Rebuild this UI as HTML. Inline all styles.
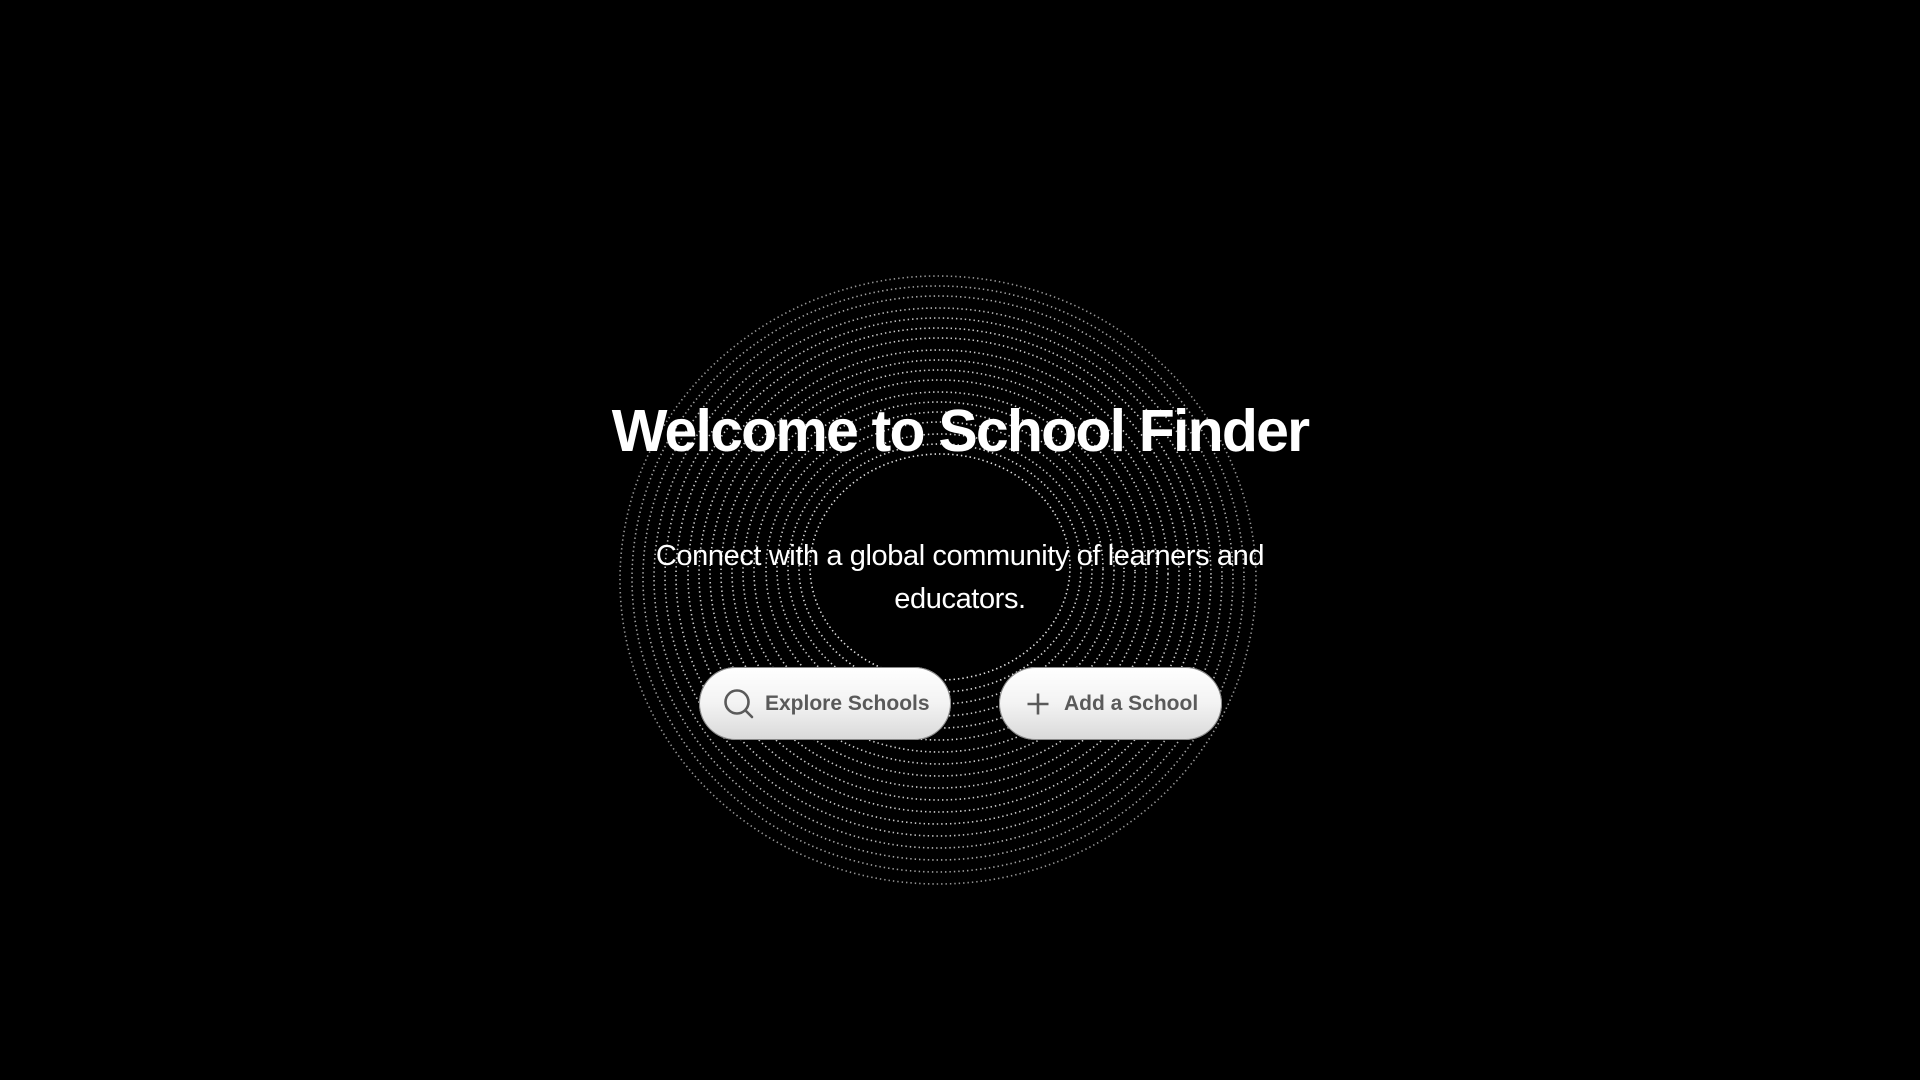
<!DOCTYPE html>
<html><head><meta charset="utf-8"><style>
html,body{margin:0;padding:0;background:#000;width:1920px;height:1080px;overflow:hidden;font-family:"Liberation Sans",sans-serif}
svg.bg{position:absolute;left:0;top:0}
.t{position:absolute;left:0;width:1920px;text-align:center;color:#fff}
h1{margin:0;font-size:59px;font-weight:bold;top:398px;letter-spacing:-1.8px;line-height:66px}
.sub{top:535px;font-size:29px;line-height:43px;letter-spacing:-0.4px}
.btn{position:absolute;top:667px;height:73px;border-radius:37px;background:linear-gradient(#fff 0%,#f3f3f3 50%,#d9d9d9 100%);color:#5a5a5a;font-weight:bold;font-size:21px;box-shadow:0 0 0 1px #888 inset}
.btn span{position:absolute;top:26px;line-height:21px}
</style></head><body>
<svg class="bg" width="1920" height="1080" fill="none" stroke="#e6e6e6" stroke-width="1.6" stroke-dasharray="1.4 3">
<ellipse cx="940" cy="567" rx="130" ry="113"/>
<ellipse cx="940" cy="568" rx="141" ry="124" opacity=".95"/>
<ellipse cx="940" cy="569" rx="152" ry="135" opacity=".9"/>
<ellipse cx="940" cy="569" rx="163" ry="147" opacity=".9"/>
<ellipse cx="940" cy="570" rx="174" ry="158" opacity=".9"/>
<ellipse cx="939" cy="571" rx="185" ry="169" opacity=".9"/>
<ellipse cx="939" cy="572" rx="196" ry="180" opacity=".9"/>
<ellipse cx="939" cy="572" rx="207" ry="192" opacity=".9"/>
<ellipse cx="939" cy="573" rx="218" ry="203" opacity=".9"/>
<ellipse cx="939" cy="574" rx="229" ry="214" opacity=".9"/>
<ellipse cx="939" cy="575" rx="240" ry="225" opacity=".9"/>
<ellipse cx="939" cy="575" rx="251" ry="237" opacity=".9"/>
<ellipse cx="938" cy="576" rx="262" ry="248" opacity=".9"/>
<ellipse cx="938" cy="577" rx="273" ry="259" opacity=".85"/>
<ellipse cx="938" cy="578" rx="284" ry="270" opacity=".8"/>
<ellipse cx="938" cy="578" rx="295" ry="282" opacity=".75"/>
<ellipse cx="938" cy="579" rx="306" ry="293" opacity=".7"/>
<ellipse cx="938" cy="580" rx="318" ry="304" opacity=".65"/>
</svg>
<h1 class="t">Welcome to School Finder</h1>
<div class="t sub">Connect with a global community of learners and<br>educators.</div>
<div class="btn" style="left:699px;width:252px">
<svg style="position:absolute;left:23px;top:20px" width="34" height="34" fill="none" stroke="#5a5a5a" stroke-width="2.6" stroke-linecap="round"><circle cx="15" cy="15" r="11.5"/><path d="M23.5 23.5L30 30"/></svg>
<span style="left:66px">Explore Schools</span></div>
<div class="btn" style="left:999px;width:223px">
<svg style="position:absolute;left:27px;top:25px" width="24" height="24" stroke="#5a5a5a" stroke-width="2.6"><path d="M12 1.5V22.5M1.5 12H22.5"/></svg>
<span style="left:65px">Add a School</span></div>
</body></html>
